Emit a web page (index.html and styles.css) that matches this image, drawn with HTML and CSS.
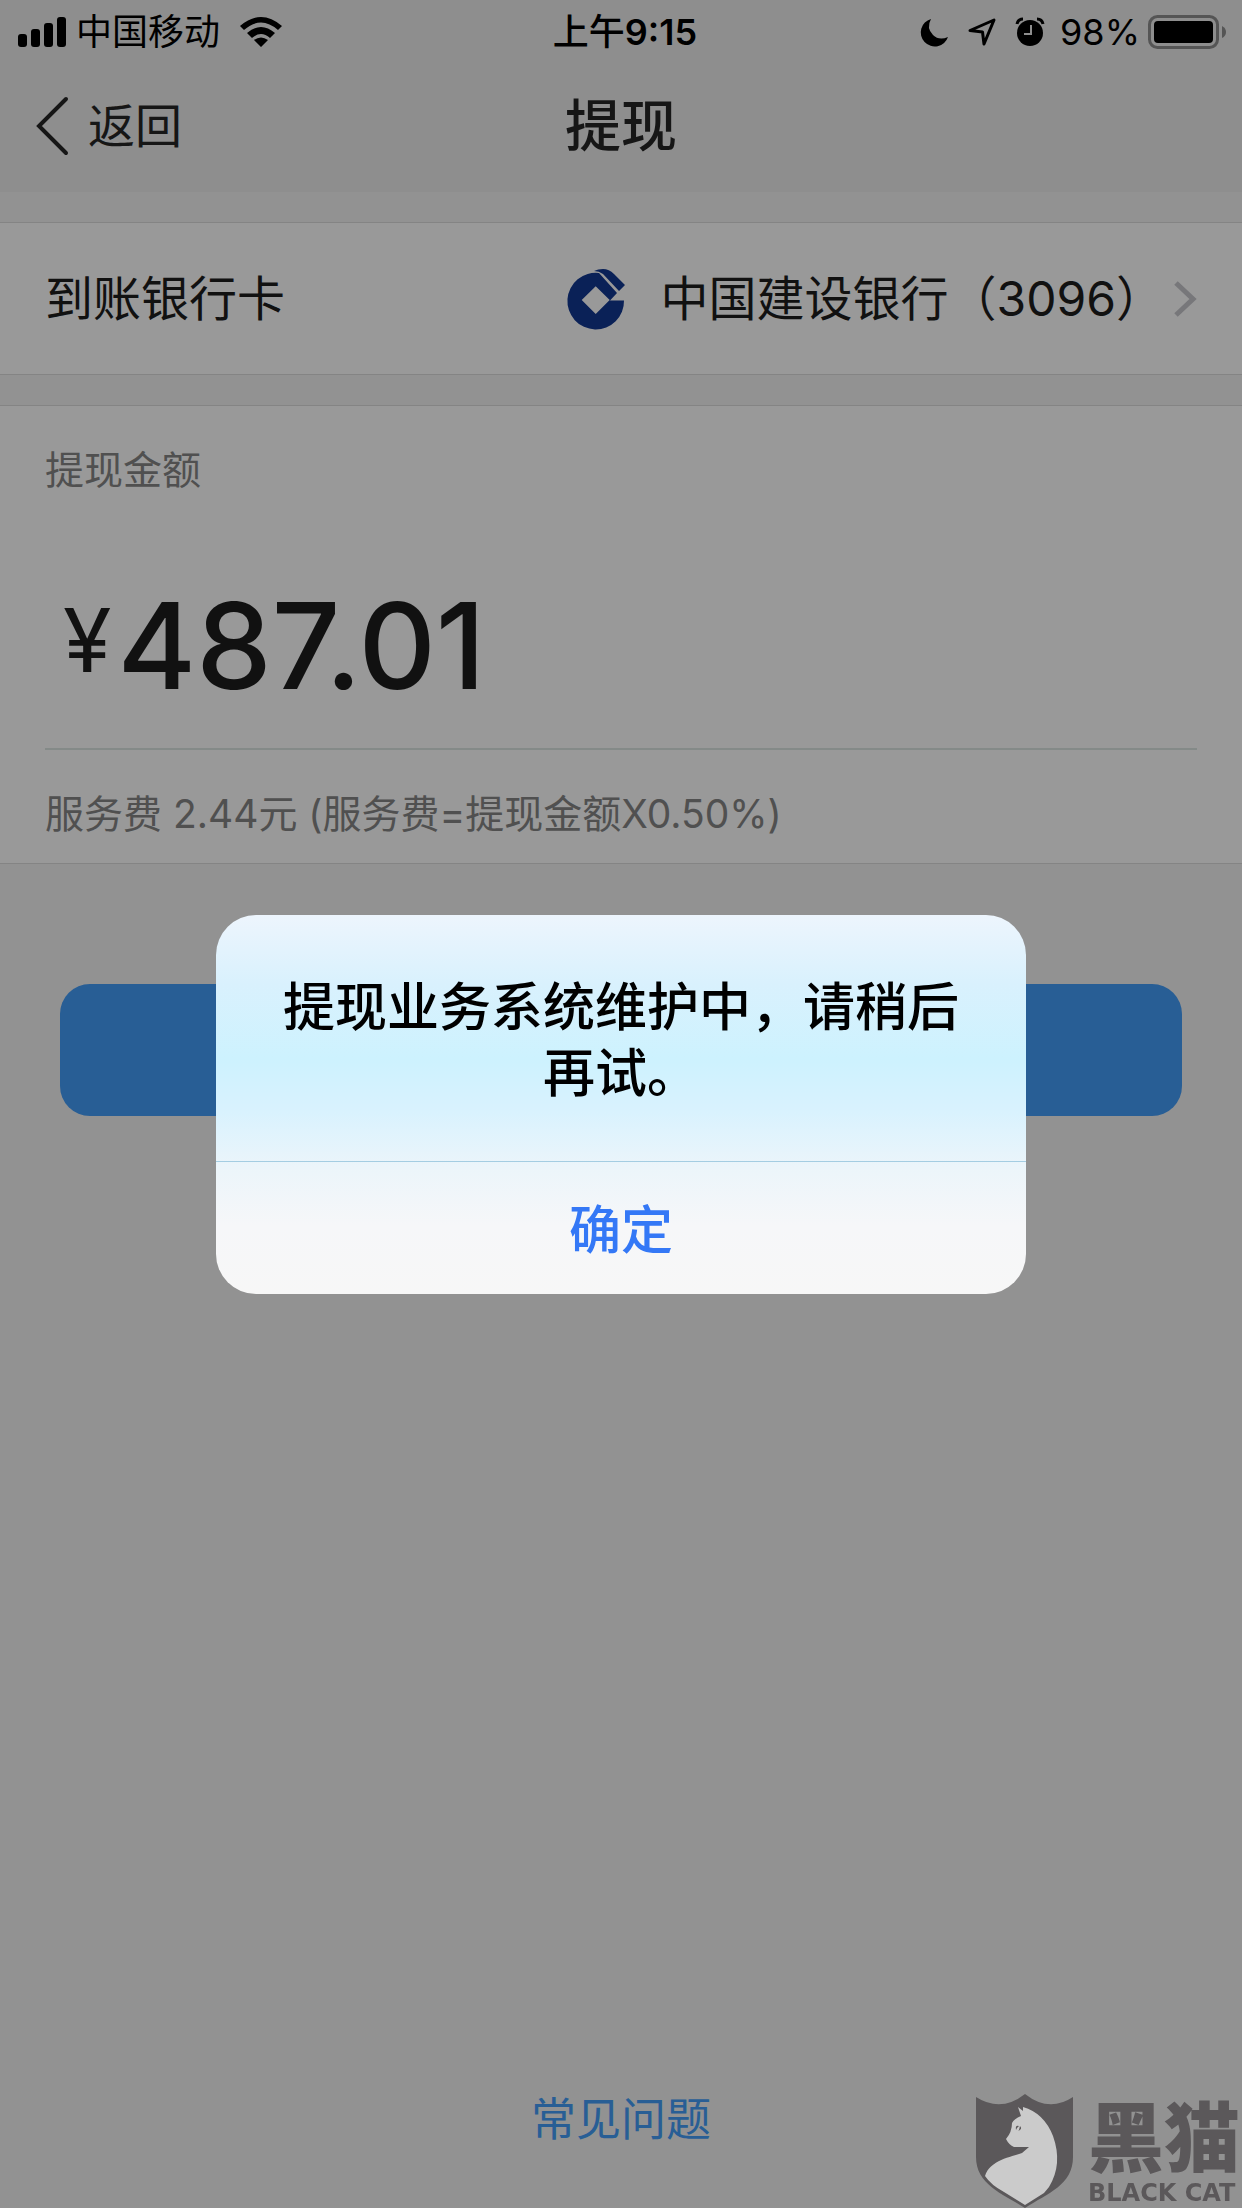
FILE: index.html
```html
<!DOCTYPE html>
<html lang="zh-CN">
<head>
<meta charset="utf-8">
<meta name="viewport" content="width=device-width, initial-scale=1">
<title>提现</title>
<link rel="stylesheet" href="styles.css">
</head>
<body>
<div class="page">
  <header class="header">
    <div class="status">
      <div class="status-left">
        <svg class="signal" viewBox="0 0 48 30" aria-hidden="true"><rect y="17" width="9" height="13" rx="3"/><rect x="13" y="12" width="9" height="18" rx="3"/><rect x="26" y="6" width="9" height="24" rx="3"/><rect x="39" width="9" height="30" rx="3"/></svg>
        <span class="carrier">中国移动</span>
        <svg class="wifi" viewBox="0 0 42 30" aria-hidden="true"><path d="M0 9Q21-9 42 9L38 13Q21-2 4 13ZM7 16Q21 4 35 16L30 21Q21 13 12 21ZM14 23Q21 18 28 23L21 30Z"/></svg>
      </div>
      <time class="clock">上午<span class="clock-digits">9:15</span></time>
      <div class="status-right">
        <svg class="moon" viewBox="0 0 27 27" aria-hidden="true"><path d="M10 0A14 14 0 1 0 27 18Q18 22 12 16Q5 9 10 0Z"/></svg>
        <svg class="locate" viewBox="0 0 28 28" aria-hidden="true"><path d="M2 12.500 26 2 16 26 14.500 14Z"/></svg>
        <svg class="alarm" viewBox="0 0 28 28" aria-hidden="true"><circle cx="14" cy="15" r="13"/><path d="M1 6Q2 1 7 1M27 6Q26 1 21 1" class="alarm-bells"/><path d="M15 7V16H8" class="alarm-hands"/></svg>
        <span class="percent">98%</span>
        <svg class="battery" viewBox="0 0 78 34" aria-hidden="true"><rect x="1.500" y="1.500" width="68" height="31" rx="8" class="battery-case"/><rect x="6" y="6" width="59" height="22" rx="4"/><path d="M74 11Q78 13 78 17T74 23Z" class="battery-tip"/></svg>
      </div>
    </div>
    <nav class="nav">
      <a class="back" href="#"><svg class="back-icon" viewBox="0 0 32 60" aria-hidden="true"><path d="M30 3 3 30 30 57"/></svg>返回</a>
      <h1 class="title">提现</h1>
    </nav>
  </header>
  <main class="main">
    <a class="panel card-row" href="#">
      <span class="card-label">到账银行卡</span>
      <svg class="bank-logo" viewBox="0 0 58 60" aria-hidden="true"><path fill-rule="evenodd" d="M32 4 50 24 43 31.500H57A28.300 28.300 0 1 1 32 4ZM14.700 31 28.700 45 42.700 31 28.700 17.300Z"/><path d="M27 2Q31 0 36 0 42 0 47 5L58 16 52 22 36 5Q32 2 27 2Z"/></svg>
      <span>中国建设银行（3096）</span>
      <svg class="chevron" viewBox="0 0 24 38" aria-hidden="true"><path d="M3 3 20 19 3 35"/></svg>
    </a>
    <section class="panel amount">
      <h2 class="amount-label">提现金额</h2>
      <p class="amount-value"><span class="yen">¥</span><span>487.01</span></p>
      <p class="fee">服务费 2.44元 (服务费=提现金额X0.50%)</p>
    </section>
    <button class="submit" type="button" aria-label="提现"></button>
  </main>
  <footer class="footer"><a class="faq" href="#">常见问题</a></footer>
</div>
<div class="overlay">
  <div class="alert" role="alertdialog" aria-labelledby="alert-title">
    <p class="alert-title" id="alert-title">提现业务系统维护中，请稍后再试。</p>
    <button class="alert-ok" type="button">确定</button>
  </div>
</div>
<div class="watermark">
  <svg class="shield" viewBox="0 0 98 114" aria-hidden="true"><path class="mark-dark" d="M0 3Q25 19 49 0Q73 19 97 3V63C97 91 72 99 49 114C25 99 0 90 0 63Z"/><path class="mark-cat" d="M42 13 47 17V13Q68 19 77 42Q87 70 73 93L68 99 49 111 28 98Q15 91 9 82C14 66 35 63 46 59L53 53H38Q33 51 30 45 36 38 36 29 38 25 45 22Z"/><path class="mark-dark" d="M40 36Q39 31 43 32L41 34M42 37Q47 35 44 32L43 36Z"/></svg>
  <div class="brand">
    <span class="brand-cn">黑猫</span>
    <span class="brand-en">BLACK CAT</span>
  </div>
</div>
</body>
</html>
```
FILE: styles.css
```css
* { box-sizing: border-box; }

body {
  margin: 0;
  background: #929292;
  color: #111;
  font-family: Inter, "Noto Sans CJK SC", sans-serif;
  font-size: 48px;
  line-height: 64px;
}

h1, h2, p { margin: 0; font-weight: 400; }
a { color: inherit; text-decoration: none; }
button { border: 0; padding: 0; font: inherit; }
svg { flex: none; fill: currentColor; overflow: visible; }

.page { display: flex; flex-direction: column; min-height: 100vh; }

.header { background: #8e8e8e; color: #000; }

.status {
  display: grid;
  grid-template-columns: 1fr auto 1fr;
  align-items: center;
  height: 64px;
  padding: 0 16px 0 18px;
  font-size: 36px;
}
.status-left, .status-right { display: flex; align-items: center; }
.status-right { justify-content: flex-end; }
.signal { width: 48px; height: 30px; }
.carrier { margin: 0 20px 0 10px; }
.wifi { width: 42px; height: 30px; }
.clock { padding-left: 6px; font-weight: 500; }
.clock-digits { font-weight: 600; }
.moon { width: 27px; height: 27px; margin-right: 20px; }
.locate { width: 28px; height: 28px; margin-right: 20px; fill: none; stroke: #000; stroke-width: 3; stroke-linejoin: round; }
.alarm { width: 28px; height: 28px; margin-right: 16px; }
.alarm-bells { fill: none; stroke: #000; stroke-width: 3; }
.alarm-hands { fill: none; stroke: #8e8e8e; stroke-width: 2; }
.percent { margin-right: 8px; }
.battery { width: 78px; height: 34px; }
.battery-case { fill: none; stroke: #555; stroke-width: 3; }
.battery-tip { fill: #555; }

.nav {
  display: grid;
  grid-template-columns: 1fr auto 1fr;
  align-items: center;
  height: 128px;
  padding: 0 36px 4px;
  color: #161616;
}
.back { display: flex; align-items: center; gap: 20px; font-size: 47px; }
.back-icon { width: 32px; height: 60px; fill: none; stroke: currentColor; stroke-width: 4; stroke-linecap: round; }
.title { font-size: 56px; font-weight: 500; }

.main { display: flex; flex-direction: column; gap: 30px; padding-top: 30px; }
.panel { background: #999; border-top: 1px solid #848484; border-bottom: 1px solid #848484; }

.card-row { display: flex; align-items: center; height: 153px; padding: 0 45px; }
.card-label { margin-right: auto; }
.bank-logo { width: 58px; height: 60px; margin-right: 36px; fill: #0a2157; }
.chevron { width: 24px; height: 38px; margin-left: 9px; fill: none; stroke: #77777a; stroke-width: 5; }

.amount { padding: 32px 45px 17px; color: #505050; }
.amount-label { font-size: 39px; }
.amount-value {
  display: flex;
  align-items: flex-start;
  gap: 6px;
  height: 248px;
  padding: 80px 0 0 18px;
  border-bottom: 2px solid #848a88;
  color: #111;
  font-size: 120px;
  font-weight: 500;
  line-height: 128px;
}
.yen { font-size: 88px; font-weight: 400; line-height: 116px; }
.fee { padding-top: 32px; font-size: 39px; }

.submit { height: 132px; margin: 90px 60px 0; border-radius: 30px; background: #285e95; }

.footer { margin-top: auto; padding-bottom: 56px; text-align: center; }
.faq { color: #285e95; font-size: 45px; }

.overlay { position: fixed; inset: 0; display: flex; align-items: center; justify-content: center; }
.alert {
  width: 810px;
  overflow: hidden;
  border-radius: 40px;
  background: linear-gradient(#edf5fd, #d9f1fd 18%, #cdf2fe 38%, #d9f2fe 52%, #ecf5fa 67%, #f6f7f9 82%, #f7f7f7);
  color: #000;
  font-size: 52px;
  font-weight: 500;
  line-height: 66px;
  text-align: center;
}
.alert-title { padding: 60px 60px 54px; font-weight: 500; }
.alert-ok {
  display: block;
  width: 100%;
  height: 133px;
  padding-top: 6px;
  border-top: 1px solid #a4cde2;
  background: transparent;
  color: #3478f6;
}

.watermark { position: fixed; right: 0; bottom: 0; display: flex; align-items: flex-end; gap: 14px; color: #5b585a; }
.shield { width: 98px; height: 114px; }
.mark-dark { fill: #5b585a; }
.mark-cat { fill: #cbcbcb; }
.brand { display: flex; flex-direction: column; gap: 10px; padding: 0 2px 3px 0; }
.brand-cn { font-family: "Noto Sans CJK SC", sans-serif; font-size: 76px; font-weight: 900; line-height: 76px; }
.brand-en { font-family: "DejaVu Sans", sans-serif; font-size: 24px; font-weight: 700; line-height: 24px; white-space: nowrap; }
```
